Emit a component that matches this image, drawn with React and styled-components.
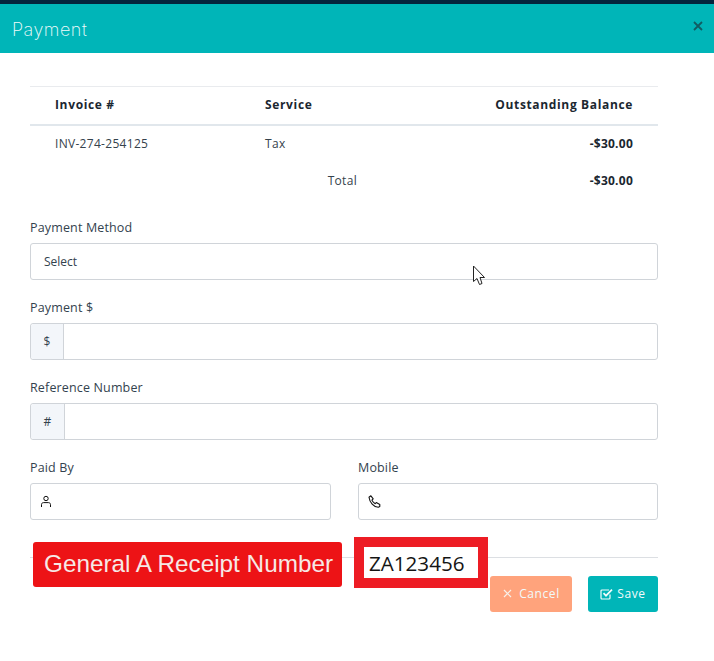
import React from "react";
import styled, { createGlobalStyle } from "styled-components";

const Global = createGlobalStyle`
  html, body { margin: 0; padding: 0; background: #fff; }
  body { font-family: "Open Sans", "Liberation Sans", sans-serif; font-size: 12px; color: #3b4a54; }
`;

const Page = styled.div`
  position: relative;
  width: 714px;
  height: 661px;
  overflow: hidden;
  border-top: 4px solid #04243c;
  box-sizing: border-box;
`;

const Header = styled.header`
  height: 49px;
  background: #00b5b8;
  display: flex;
  align-items: center;
  justify-content: space-between;
  padding: 0 11px 0 12px;
  box-sizing: border-box;
`;

const Title = styled.h1`
  margin: 0;
  font-family: "Inter", "Open Sans", sans-serif;
  font-weight: 200;
  font-size: 18px;
  letter-spacing: 0.5px;
  color: #f0fbfb;
  position: relative;
  top: 1px;
`;

const Close = styled.span`
  display: flex;
  position: relative;
  top: -3px;
  color: #115c62;
`;

const Body = styled.main`
  padding: 33px 56px 0 30px;
  display: flex;
  flex-direction: column;
`;

const Row = styled.div`
  display: grid;
  grid-template-columns: 210px 92px 1fr;
  align-items: center;
  padding: 0 25px 2px;
  height: ${(p) => p.$h}px;
  box-sizing: border-box;
  border-top: ${(p) => (p.$top ? "1px solid #e9ebee" : "none")};
  border-bottom: ${(p) => (p.$bottom ? "2px solid #e1e7ec" : "none")};
  color: #2c3a44;
`;

const Head = styled.span`
  font-weight: 700;
  font-size: 12px;
  color: #1b2730;
  text-align: ${(p) => p.$align || "left"};
  letter-spacing: 0.65px;
`;

const Cell = styled.span`
  font-size: 12px;
  color: #35424c;
  text-align: ${(p) => p.$align || "left"};
  letter-spacing: 0.3px;
`;

const Amount = styled.span`
  font-size: 12px;
  font-weight: 700;
  color: #1b2730;
  text-align: right;
  letter-spacing: 0.25px;
`;

const Fields = styled.div`
  margin-top: 19px;
  display: flex;
  flex-direction: column;
  gap: 19px;
`;

const Field = styled.div`
  display: flex;
  flex-direction: column;
  flex: ${(p) => p.$flex || "none"};
`;

const Label = styled.label`
  font-size: 12.5px;
  line-height: 17px;
  height: 17px;
  margin-bottom: 7px;
  color: #33424e;
  letter-spacing: 0.15px;
`;

const Control = styled.div`
  height: 37px;
  box-sizing: border-box;
  border: 1px solid #d0d4d9;
  border-radius: 3px;
  display: flex;
  align-items: center;
  background: #fff;
  padding-left: ${(p) => p.$pad || 0}px;
  font-size: 12px;
  color: #33424e;
`;

const Addon = styled.span`
  width: ${(p) => p.$w}px;
  height: 100%;
  box-sizing: border-box;
  flex: none;
  background: #f3f6fa;
  border-right: 1px solid #d0d4d9;
  border-radius: 3px 0 0 3px;
  display: flex;
  align-items: center;
  justify-content: center;
  font-size: 12px;
  color: #33424e;
`;

const Pair = styled.div`
  display: flex;
  gap: 27px;
`;

const Footer = styled.footer`
  margin-top: 37px;
  border-top: 1px solid #dcdfe3;
  padding-top: 18px;
  display: flex;
  justify-content: flex-end;
  gap: 16px;
`;

const Button = styled.button`
  height: 36px;
  width: ${(p) => p.$w}px;
  border: none;
  border-radius: 3px;
  background: ${(p) => p.$bg};
  color: #f2fbfb;
  font-family: "Open Sans", sans-serif;
  font-size: 12px;
  letter-spacing: 0.6px;
  display: flex;
  align-items: center;
  justify-content: center;
  gap: ${(p) => p.$gap}px;
  padding: 0 0 1px ${(p) => p.$left || 0}px;
`;

const Banner = styled.div`
  position: absolute;
  left: 33px;
  top: 538px;
  width: 309px;
  height: 45px;
  padding: 0 0 2px 2px;
  box-sizing: border-box;
  background: #ed1316;
  border-radius: 3px;
  color: #f6e9e6;
  font-family: "Liberation Sans", Arial, sans-serif;
  font-size: 24.3px;
  display: flex;
  align-items: center;
  justify-content: center;
  white-space: nowrap;
`;

const ReceiptBox = styled.div`
  position: absolute;
  left: 354px;
  top: 533px;
  width: 134px;
  height: 51px;
  box-sizing: border-box;
  border: 10px solid #ed1c24;
  background: #fff;
  color: #141414;
  font-family: "Open Sans", sans-serif;
  font-size: 20.6px;
  display: flex;
  align-items: center;
  padding-left: 5px;
`;

const Pointer = styled.svg`
  position: absolute;
  left: 472px;
  top: 261px;
`;

const UserIcon = () => (
  <svg width="12" height="13" viewBox="0 0 12 13" fill="none" stroke="#111" strokeWidth="1">
    <circle cx="6" cy="3.5" r="2.2" />
    <path d="M1.5 12V9.5C1.5 8.4 2.4 7.6 3.5 7.6H8.5C9.6 7.6 10.5 8.4 10.5 9.5V12" />
  </svg>
);

const PhoneIcon = () => (
  <svg width="13" height="13" viewBox="0 0 13 13" fill="none" stroke="#111" strokeWidth="1.1" strokeLinejoin="round">
    <path d="M1 2.2L2.9.8 5.2 3.8 3.9 5.1C4.5 6.6 5.6 7.8 7.2 8.7L8.3 7.6 11.8 9.4V11.6L10.3 12.3C5.8 12.2 1.6 7.2 1 2.2Z" />
  </svg>
);

const CheckIcon = () => (
  <svg width="13" height="12" viewBox="0 0 13 12" fill="none" stroke="#f2fbfb" strokeWidth="1.2">
    <path d="M10 6.5V10a1 1 0 0 1-1 1H2a1 1 0 0 1-1-1V3a1 1 0 0 1 1-1h7" />
    <path d="M3.5 5.2L6 7.7 12 1.6" strokeWidth="1.7" />
  </svg>
);

const CloseIcon = () => (
  <svg width="10" height="10" viewBox="0 0 10 10" stroke="currentColor" strokeWidth="1.8">
    <path d="M1 1L9 9M9 1L1 9" />
  </svg>
);

const CancelIcon = () => (
  <svg width="9" height="9" viewBox="0 0 9 9" stroke="#f8f1ea" strokeWidth="1.2">
    <path d="M1 1L8 8M8 1L1 8" />
  </svg>
);

export default function App() {
  return (
    <Page>
      <Global />
      <Header>
        <Title>Payment</Title>
        <Close><CloseIcon /></Close>
      </Header>
      <Body>
        <Row $h={40} $top $bottom>
          <Head>Invoice #</Head>
          <Head>Service</Head>
          <Head $align="right">Outstanding Balance</Head>
        </Row>
        <Row $h={36}>
          <Cell>INV-274-254125</Cell>
          <Cell>Tax</Cell>
          <Amount>-$30.00</Amount>
        </Row>
        <Row $h={38}>
          <span />
          <Cell $align="right">Total</Cell>
          <Amount>-$30.00</Amount>
        </Row>
        <Fields>
          <Field>
            <Label>Payment Method</Label>
            <Control $pad={13}>Select</Control>
          </Field>
          <Field>
            <Label>Payment $</Label>
            <Control><Addon $w={33}>$</Addon></Control>
          </Field>
          <Field>
            <Label>Reference Number</Label>
            <Control><Addon $w={34}>#</Addon></Control>
          </Field>
          <Pair>
            <Field $flex="0 0 301px">
              <Label>Paid By</Label>
              <Control $pad={9}><UserIcon /></Control>
            </Field>
            <Field $flex="1">
              <Label>Mobile</Label>
              <Control $pad={9}><PhoneIcon /></Control>
            </Field>
          </Pair>
        </Fields>
        <Footer>
          <Button $w={82} $bg="#ffa37c" $gap={7} $left={1}><CancelIcon />Cancel</Button>
          <Button $w={70} $bg="#00b5b8" $gap={4}><CheckIcon />Save</Button>
        </Footer>
      </Body>
      <Banner>General A Receipt Number</Banner>
      <ReceiptBox>ZA123456</ReceiptBox>
      <Pointer width="14" height="21" viewBox="0 0 14 21" fill="#fff" stroke="#222" strokeWidth="1">
        <path d="M1.5 1V16.5L5 13.5 7.5 19.5 10 18.5 8 12.5H12.5Z" />
      </Pointer>
    </Page>
  );
}
